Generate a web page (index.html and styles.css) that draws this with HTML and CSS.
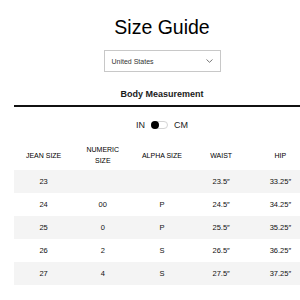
FILE: index.html
```html
<!DOCTYPE html>
<html>
<head>
<meta charset="utf-8">
<link rel="stylesheet" href="styles.css">
</head>
<body>
<div class="page">
  <h1 class="title">Size Guide</h1>
  <div class="select-wrap">
    <div class="select-box">
      <span>United States</span>
      <svg class="chev" width="7" height="4" viewBox="0 0 7 4"><path d="M0.5 0.5 L3.5 3.3 L6.5 0.5" fill="none" stroke="#555" stroke-width="0.8"/></svg>
    </div>
  </div>
  <div class="tabs"><span class="tab">Body Measurement</span></div>
  <div class="units">
    <span>IN</span>
    <span class="switch"><span class="knob"></span></span>
    <span>CM</span>
  </div>
  <table class="sizes">
    <thead>
      <tr><th>JEAN SIZE</th><th>NUMERIC<br>SIZE</th><th>ALPHA SIZE</th><th>WAIST</th><th>HIP</th></tr>
    </thead>
    <tbody>
      <tr><td>23</td><td></td><td></td><td>23.5″</td><td>33.25″</td></tr>
      <tr><td>24</td><td>00</td><td>P</td><td>24.5″</td><td>34.25″</td></tr>
      <tr><td>25</td><td>0</td><td>P</td><td>25.5″</td><td>35.25″</td></tr>
      <tr><td>26</td><td>2</td><td>S</td><td>26.5″</td><td>36.25″</td></tr>
      <tr><td>27</td><td>4</td><td>S</td><td>27.5″</td><td>37.25″</td></tr>
    </tbody>
  </table>
</div>
</body>
</html>
```
FILE: styles.css
```css
html, body {
  margin: 0;
  padding: 0;
  overflow: hidden;
  background: #fff;
}
body {
  font-family: "Liberation Sans", Arial, sans-serif;
  color: #111;
}
.page {
  margin-left: 14px;
  width: 296px;
}
.title {
  margin: 16px 0 0;
  font-size: 19.5px;
  line-height: 22px;
  font-weight: normal;
  text-align: center;
  color: #000;
}
.select-wrap {
  display: flex;
  justify-content: center;
  margin-top: 12px;
}
.select-box {
  width: 117px;
  height: 22px;
  box-sizing: border-box;
  border: 1px solid #c8c8c8;
  display: flex;
  align-items: center;
  justify-content: space-between;
  padding: 0 7px 0 7px;
  font-size: 7px;
  color: #333;
}
.chev { display: block; }
.tabs {
  margin-top: 11px;
  border-bottom: 2px solid #111;
  text-align: center;
  padding-bottom: 4px;
}
.tab {
  font-size: 9px;
  line-height: 12px;
  font-weight: bold;
  color: #1a1a1a;
  display: inline-block;
}
.units {
  margin-top: 12px;
  display: flex;
  justify-content: center;
  align-items: center;
  gap: 6px;
  font-size: 9px;
  line-height: 12px;
  color: #1a1a1a;
}
.switch {
  width: 17px;
  height: 8px;
  box-sizing: border-box;
  border: 1px solid #d4d4d4;
  border-radius: 5px;
  position: relative;
  background: #fff;
}
.knob {
  position: absolute;
  left: -1px;
  top: -1px;
  width: 8px;
  height: 8px;
  border-radius: 50%;
  background: #000;
}
.sizes {
  margin-top: 9px;
  width: 296px;
  table-layout: fixed;
  border-collapse: collapse;
  font-size: 7.5px;
  color: #111;
}
.sizes th {
  font-weight: normal;
  font-size: 7px;
  line-height: 11px;
  height: 30px;
  padding: 0;
  text-align: center;
  color: #000;
}
.sizes td {
  height: 23px;
  padding: 0;
  text-align: center;
}
.sizes tbody tr:nth-child(odd) {
  background: #f4f4f4;
}
```
